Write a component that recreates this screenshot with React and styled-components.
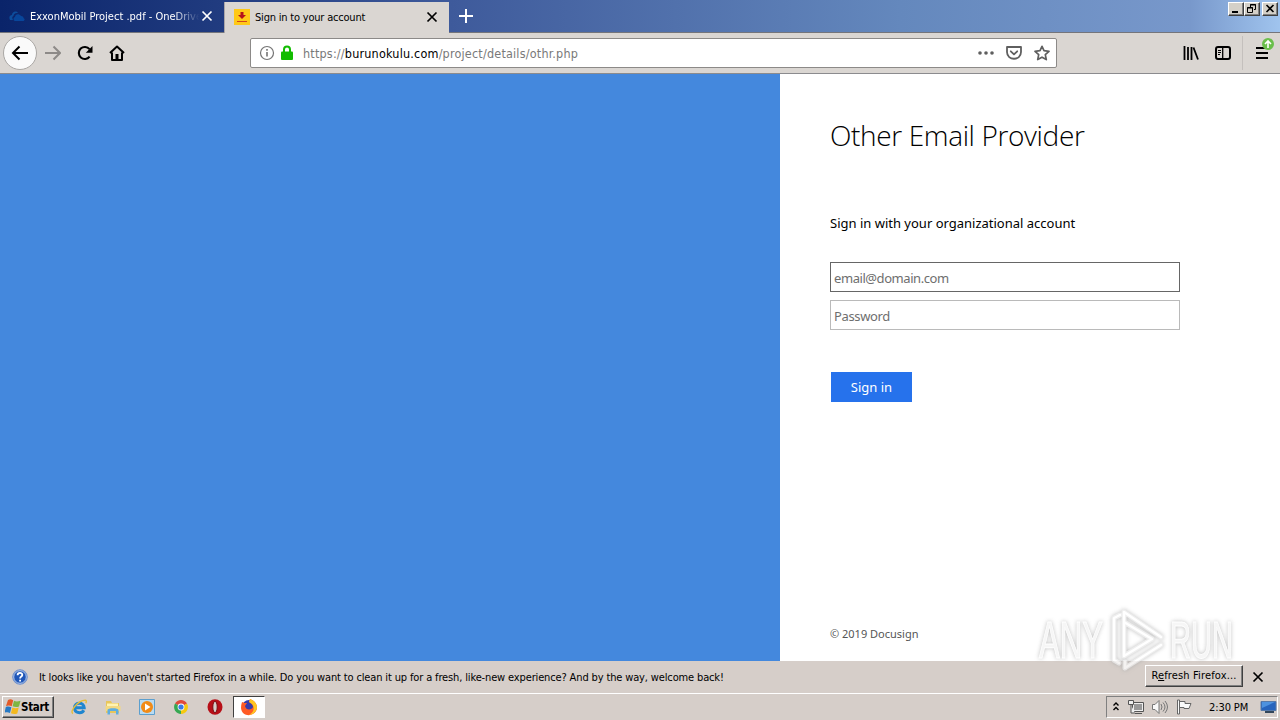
import styled, { createGlobalStyle, css } from "styled-components";

const GlobalStyle = createGlobalStyle`
  * { box-sizing: border-box; }
  body { margin: 0; overflow: hidden; }
  svg { display: block; flex: none; }
`;

const uiFont = '"DejaVu Sans Condensed", "DejaVu Sans", sans-serif';
const pageFont = '"Noto Sans", "Open Sans", sans-serif';

const Screen = styled.div`
  position: relative;
  width: 1280px;
  height: 720px;
  display: flex;
  flex-direction: column;
  font-family: ${uiFont};
  font-size: 11px;
  color: #000;
  background: #d4d0c8;
`;

const TabStrip = styled.div`
  height: 33px;
  flex: none;
  display: flex;
  align-items: flex-start;
  background: linear-gradient(90deg, #0a246a 0, #213c80 225px, #3e5a9b 450px, #6488bd 900px, #7898cb 1190px, #a0c4ee 1280px);
  border-bottom: 1px solid #74757b;
`;

const Tab = styled.div`
  display: flex;
  align-items: center;
  width: ${(p) => (p.$active ? 225 : 224)}px;
  height: ${(p) => (p.$active ? 31 : 32)}px;
  margin-top: ${(p) => (p.$active ? 2 : 0)}px;
  padding: 0 11px ${(p) => (p.$active ? 1 : 0)}px 9px;
  color: ${(p) => (p.$active ? "#000" : "#fff")};
  background: ${(p) => (p.$active ? "#dad6d2" : "transparent")};
  border-left: ${(p) => (p.$active ? "1px solid #aaa6a8" : "0")};
`;

const TabTitle = styled.span`
  flex: 1;
  margin-left: 5px;
  overflow: hidden;
  white-space: nowrap;
  letter-spacing: ${(p) => p.$spacing}px;
  ${(p) =>
    p.$fade &&
    css`
      mask-image: linear-gradient(90deg, #000 84%, transparent 99%);
    `}
`;

const NewTab = styled.div`
  padding: 8px 9px;
`;

const WindowButtons = styled.div`
  display: flex;
  margin: 2px 2px 0 auto;
`;

const WindowButton = styled.div`
  width: 16px;
  height: 14px;
  margin-left: ${(p) => (p.$gap ? 2 : 0)}px;
  background: #d4d0c8;
  border: 1px solid;
  border-color: #fff #404040 #404040 #fff;
  box-shadow: inset -1px -1px 0 #808080;
`;

const Toolbar = styled.div`
  height: 41px;
  flex: none;
  display: flex;
  align-items: center;
  background: #dad6d2;
  border-bottom: 1px solid #8b8b8e;
`;

const BackButton = styled.div`
  width: 34px;
  height: 34px;
  margin: 0 8px 0 3px;
  display: flex;
  align-items: center;
  justify-content: center;
  border: 1px solid #aaa7a4;
  border-radius: 50%;
  background: #fafafa;
`;

const NavIcons = styled.div`
  display: flex;
  gap: 16px;
`;

const UrlBar = styled.div`
  width: 807px;
  height: 30px;
  margin-left: 125px;
  padding: 0 6px 0 8px;
  display: flex;
  align-items: center;
  background: #fff;
  border: 1px solid #8c8a88;
  border-radius: 2px;
`;

const SiteIdentity = styled.div`
  display: flex;
  gap: 6px;
`;

const Url = styled.span`
  flex: 1;
  margin-left: 10px;
  font-size: 12.5px;
  letter-spacing: 0.19px;
  color: #797979;

  b {
    font-weight: 400;
    color: #000;
  }
`;

const UrlActions = styled.div`
  display: flex;
  gap: 12px;
`;

const ToolIcons = styled.div`
  display: flex;
  align-items: center;
  gap: 16px;
  margin-left: auto;
`;

const MenuButton = styled.div`
  display: flex;
  align-items: center;
  height: 34px;
  width: 38px;
  margin-left: -5px;
  padding-left: 11px;
  border-left: 1px solid #c4c0bd;
`;

const Page = styled.main`
  height: 587px;
  flex: none;
  display: flex;
  background: #fff;
  font-family: ${pageFont};
`;

const Illustration = styled.div`
  width: 780px;
  background: #4488dd;
`;

const LoginPanel = styled.section`
  width: 500px;
  padding: 40px 100px 20px 50px;
  display: flex;
  flex-direction: column;
  align-items: flex-start;
`;

const Title = styled.h1`
  margin: 0;
  font-family: "Open Sans", "Noto Sans", sans-serif;
  font-size: 28px;
  line-height: 42px;
  font-weight: 300;
  letter-spacing: -0.36px;
  white-space: nowrap;
`;

const Instruction = styled.p`
  margin: 57px 0 28px;
  font-size: 13px;
  line-height: 21px;
  white-space: nowrap;
`;

const Field = styled.input`
  width: 350px;
  height: 30px;
  margin: 0 0 8px;
  padding: 1px 3px 0;
  border: 1px solid ${(p) => (p.$focused ? "#666666" : "#bababa")};
  border-radius: 0;
  outline: none;
  font-family: ${pageFont};
  font-size: 13px;
  letter-spacing: ${(p) => p.$spacing}px;

  &::placeholder {
    color: #6e6e6e;
    opacity: 1;
  }
`;

const SubmitButton = styled.button`
  width: 81px;
  height: 30px;
  margin: 34px 0 0 1px;
  padding: 0;
  border: 0;
  background: #2672ec;
  color: #fff;
  font-family: ${pageFont};
  font-size: 13px;
`;

const Copyright = styled.footer`
  margin-top: auto;
  font-size: 11px;
  line-height: 15px;
  color: #555;
`;

const NotificationBar = styled.div`
  height: 32px;
  flex: none;
  display: flex;
  align-items: center;
  padding: 0 16px 0 12px;
  background: #d6cec9;
`;

const Message = styled.span`
  flex: 1;
  margin-left: 11px;
  white-space: nowrap;
  letter-spacing: -0.14px;
`;

const RefreshButton = styled.div`
  width: 98px;
  height: 22px;
  margin: -2px 9px 0 0;
  line-height: 20px;
  text-align: center;
  white-space: nowrap;
  letter-spacing: 0.14px;
  background: #d6cec9;
  border: 1px solid;
  border-color: #fff #404040 #404040 #fff;
  box-shadow: inset -1px -1px 0 #808080;
`;

const Taskbar = styled.div`
  height: 27px;
  flex: none;
  display: flex;
  align-items: flex-start;
  padding: 2px 2px 0;
  background: #d6cec9;
  border-top: 1px solid #fff;
`;

const StartButton = styled.div`
  width: 52px;
  height: 22px;
  display: flex;
  align-items: center;
  padding-left: 2px;
  font-size: 11.5px;
  font-weight: 700;
  letter-spacing: -0.3px;
  border: 1px solid;
  border-color: #fff #404040 #404040 #fff;
  box-shadow: inset -1px -1px 0 #808080;
`;

const Launchers = styled.div`
  display: flex;
  align-items: center;
  height: 22px;
  gap: 18px;
  margin: 0 10px 0 17px;
`;

const ActiveTask = styled.div`
  width: 32px;
  height: 22px;
  display: flex;
  align-items: center;
  justify-content: center;
  background: #fff;
  border: 1px solid;
  border-color: #404040 #fff #fff #404040;
`;

const Tray = styled.div`
  width: 172px;
  height: 22px;
  margin-left: auto;
  display: flex;
  align-items: center;
  padding-left: 5px;
  border: 1px solid;
  border-color: #808080 #fff #fff #808080;
`;

const TrayIcons = styled.div`
  display: flex;
  align-items: center;
  gap: 8px;
`;

const Clock = styled.span`
  width: 40px;
  margin: 0 11px 0 17px;
  white-space: nowrap;
  letter-spacing: -0.1px;
`;

const Watermark = styled.div`
  position: absolute;
  left: 1039px;
  top: 608px;
  display: flex;
  align-items: center;
  gap: 5px;
  opacity: 0.75;
  filter: drop-shadow(0 0 2px #aaa);
`;

const WatermarkWord = styled.span`
  width: ${(p) => p.$width}px;
  font-family: "Liberation Sans", sans-serif;
  font-size: 51px;
  line-height: 64px;
  color: #f3f3f3;
  -webkit-text-stroke: 1px #fff;

  span {
    display: inline-block;
    transform: scaleX(${(p) => p.$scale});
    transform-origin: left;
  }
`;

const CloseIcon = ({ color = "#000", size = 12 }) => (
  <svg width={size} height={size} viewBox="0 0 12 12">
    <path d="M1.5 1.5l9 9m0-9l-9 9" stroke={color} strokeWidth="1.7" />
  </svg>
);

const CloudIcon = () => (
  <svg width="16" height="16" viewBox="0 0 16 16">
    <path d="M1 12C-.5 9 1 7 3 7c0-3 4-5 6-2-3-.5-4.5 1-4.5 3C3 8.500 3 10 4 12z" fill="#0d4d9c" />
    <path d="M6 13c-2-.5-2-3.500 0-4 0-3 4-4 6-1 2 0 2.500 1 2.500 2 2 1 1 3-.5 3z" fill="#08469b" />
  </svg>
);

const DownloadIcon = () => (
  <svg width="16" height="16" viewBox="0 0 16 16">
    <path fill="#ffc917" d="M0 0h16v16H0z" />
    <path d="M6.500 3h3v3H12L8 10 4 6h2.500z" fill="#b5121b" />
    <path d="M3 12.500h10" stroke="#d3451b" />
  </svg>
);

const BackIcon = () => (
  <svg width="18" height="16" viewBox="0 0 18 16">
    <path d="M17 8H2m6.500-6.500L2 8l6.500 6.500" stroke="#000" strokeWidth="2" fill="none" />
  </svg>
);

const ForwardIcon = () => (
  <svg width="16" height="16" viewBox="0 0 16 16">
    <path d="M0 8h14.500M8.500 1.500L15 8l-6.500 6.500" stroke="#8d8a88" strokeWidth="2" fill="none" />
  </svg>
);

const ReloadIcon = () => (
  <svg width="16" height="16" viewBox="0 0 16 16">
    <path d="M12.600 11.600A6 6 0 1 1 12.500 4.200" stroke="#000" strokeWidth="2.100" fill="none" />
    <path d="M15.500 1v6.700H8.800z" />
  </svg>
);

const HomeIcon = () => (
  <svg width="16" height="16" viewBox="0 0 16 16">
    <path d="M1 8l7-6.500L15 8M3 7.500V15h10V7.500" stroke="#000" strokeWidth="2" fill="none" strokeLinejoin="round" />
    <path d="M6.500 9h3v6h-3z" />
  </svg>
);

const InfoIcon = () => (
  <svg width="16" height="16" viewBox="0 0 16 16">
    <circle cx="8" cy="8" r="6.500" stroke="#747474" strokeWidth="1.200" fill="none" />
    <path d="M8 7v4.500M8 4v1.700" stroke="#747474" strokeWidth="1.600" />
  </svg>
);

const LockIcon = () => (
  <svg width="12" height="16" viewBox="0 0 12 16">
    <path d="M3 7V4.500C3 .6 9 .6 9 4.500V7" stroke="#12bc00" strokeWidth="2" fill="none" />
    <rect y="6.500" width="12" height="8.500" rx="1" fill="#12bc00" />
  </svg>
);

const DotsIcon = () => (
  <svg width="16" height="16" viewBox="0 0 16 16" fill="#5f5f5f">
    <circle cx="2" cy="8" r="1.800" />
    <circle cx="8" cy="8" r="1.800" />
    <circle cx="14" cy="8" r="1.800" />
  </svg>
);

const PocketIcon = () => (
  <svg width="16" height="16" viewBox="0 0 16 16" fill="none" stroke="#5f5f5f" strokeWidth="1.800" strokeLinejoin="round">
    <path d="M1 2h14v5c0 9-14 9-14 0z" />
    <path d="M4.800 6.300L8 9.300l3.200-3" strokeLinecap="round" />
  </svg>
);

const StarIcon = () => (
  <svg width="16" height="16" viewBox="0 0 16 16">
    <path d="M8 1.300l2 4.400 5 .6-3.700 3.300 1 5L8 12.200l-4.300 2.400 1-5L1 6.300l5-.6z" stroke="#5f5f5f" strokeWidth="1.700" fill="none" strokeLinejoin="round" />
  </svg>
);

const LibraryIcon = () => (
  <svg width="16" height="16" viewBox="0 0 16 16">
    <path d="M1.500 1v14M5 2v13M8.500 2v13M10.500 2.500L15 14.500" stroke="#000" fill="none" strokeWidth="1.800" />
  </svg>
);

const SidebarIcon = () => (
  <svg width="16" height="16" viewBox="0 0 16 16">
    <rect x="1" y="2" width="14" height="12" rx="2" stroke="#000" strokeWidth="2" fill="none" />
    <path d="M7.700 2v12" stroke="#000" strokeWidth="1.300" />
    <path d="M3 5.500h3m-3 2h3m-3 2h2" stroke="#000" />
  </svg>
);

const MenuIcon = () => (
  <svg width="24" height="32" viewBox="0 0 24 32">
    <path d="M2 11h12M2 16h12M2 21h12" stroke="#000" strokeWidth="2" />
    <circle cx="14" cy="7" r="6" fill="#6abf4b" />
    <path d="M14 11V4m-3 3l3-3 3 3" stroke="#fff" strokeWidth="1.600" fill="none" />
  </svg>
);

const HelpIcon = () => (
  <svg width="16" height="16" viewBox="0 0 16 16">
    <circle cx="8" cy="8" r="7.300" fill="#1f56b8" stroke="#7b98cf" />
    <circle cx="8" cy="8" r="6.300" fill="none" stroke="#dce7f8" strokeWidth=".8" />
    <path d="M5.600 6.300C5.600 3 10.500 3.300 10.300 6c0 1.500-2.200 1.600-2.200 3.400M8.100 10.700v1.800" stroke="#fff" strokeWidth="1.800" fill="none" />
  </svg>
);

const WindowsIcon = () => (
  <svg width="16" height="16" viewBox="0 0 16 16">
    <path d="M3 1c2-1 3-1 5.200.3L6.700 7.300C5 6.300 3 6.300 1 7z" fill="#e45a27" />
    <path d="M9 1.800c2 1 4 .8 6.500-.1L14 7.400c-2 .9-4.300.8-6.400-.1z" fill="#7eb642" />
    <path d="M.8 8c2-.8 3.700-.6 5.600.3L5 14c-2-1-3.500-1-5.500-.2z" fill="#2779c4" />
    <path d="M7.400 8.500c2 .9 4.300.9 6.300.1L12.300 14.500c-2 .8-4.300.8-6.400-.2z" fill="#f4b91f" />
  </svg>
);

const ExplorerIcon = () => (
  <svg width="16" height="16" viewBox="0 0 16 16" fill="none">
    <path d="M12.800 11.300c-2 3.700-9.300 3.200-9.300-2.500 0-6 9.500-6 9.700 0H5" stroke="#1f86cf" strokeWidth="3" />
    <path d="M2 14.500C-2 13 7 1 14.500 1.300c1.200.2.800 2 .3 3" stroke="#e6bd38" strokeWidth="1.400" />
  </svg>
);

const FolderIcon = () => (
  <svg width="16" height="16" viewBox="0 0 16 16">
    <path d="M1 2h5l1 2h7v10H1z" fill="#e8c65b" />
    <path d="M2 4.500h11v4H2z" fill="#fff3b1" />
    <path d="M.5 7h15v5H.5z" fill="#f2d982" />
    <path d="M2.500 15.500V11c0-2.500 11-2.500 11 0v4.500H11V12H5v3.500z" fill="#5eade0" />
  </svg>
);

const MediaIcon = () => (
  <svg width="16" height="16" viewBox="0 0 16 16">
    <path d="M.5.500h15v15H.5z" fill="#b9dbf2" stroke="#5c9fce" />
    <circle cx="8" cy="8" r="6" fill="#f18b18" />
    <path d="M6 4.500v7L11.500 8z" fill="#fff" />
  </svg>
);

const ChromeIcon = () => (
  <svg width="16" height="16" viewBox="0 0 16 16">
    <path d="M8 8L2 4.500A7 7 0 0 1 14 4.500z" fill="#e04a3b" />
    <path d="M8 8l6-3.500A7 7 0 0 1 8 15z" fill="#f6c90e" />
    <path d="M8 8v7A7 7 0 0 1 2 4.500z" fill="#36a852" />
    <circle cx="8" cy="8" r="3.400" fill="#fff" />
    <circle cx="8" cy="8" r="2.600" fill="#397be6" />
  </svg>
);

const OperaIcon = () => (
  <svg width="16" height="16" viewBox="0 0 16 16">
    <ellipse cx="8" cy="8" rx="7.500" ry="7.700" fill="#b70f17" />
    <ellipse cx="8" cy="8" rx="2.200" ry="5.700" fill="#d6cec9" stroke="#770b10" />
  </svg>
);

const FirefoxIcon = () => (
  <svg width="18" height="18" viewBox="0 0 18 18">
    <circle cx="9" cy="9" r="7" fill="#383dab" />
    <path d="M2 4c2 1 3 1 5 1L5 8c1 5 7 4 8 1 0-2-2-4-4-5l1-3c5 2 7 5 7 9-1 9-15 10-16 0 0-2 .3-4 1-6z" fill="#ff5b25" />
    <path d="M10 1c5 2 7 5 7 9-1 4-4 7-8 7 5-3 6-7 3-11L9 4z" fill="#ffc71f" />
  </svg>
);

const NetworkIcon = () => (
  <svg width="16" height="16" viewBox="0 0 16 16" stroke="#555" fill="#eee">
    <path d="M4.500 3.500h11v9h-11zM7 14.500h7" />
    <path d="M6 5h8v6H6z" fill="#999" stroke="none" />
    <path d="M.5 1.500h5v4h-5zM3 6v8h4" />
  </svg>
);

const SpeakerIcon = () => (
  <svg width="16" height="16" viewBox="0 0 16 16" stroke="#777" fill="none">
    <path d="M.5 5.500H3l4-4v13l-4-4H.5z" fill="#f8f8f8" />
    <path d="M9 5q2 3 0 6M11 3.500q4 4.500 0 9M13 2q5 6 0 12" />
  </svg>
);

const FlagIcon = () => (
  <svg width="16" height="16" viewBox="0 0 16 16" stroke="#666" fill="#fafafa">
    <path d="M1.500 1v14h2V1zM3.500 2.500H9v2h6l-2 5H8v-1H3.500z" />
  </svg>
);

const MonitorIcon = () => (
  <svg width="17" height="16" viewBox="0 0 17 16">
    <path d="M1 2.500h15v9H1z" fill="#2664bd" stroke="#577aa9" />
    <path d="M2 3h13L2 9z" fill="#4d92df" />
    <path d="M5 13h9" stroke="#33475b" strokeWidth="2" />
  </svg>
);

const App = () => {
  return (
    <Screen>
      <GlobalStyle />
      <TabStrip>
        <Tab>
          <CloudIcon />
          <TabTitle $spacing={0} $fade>ExxonMobil Project .pdf - OneDrive</TabTitle>
          <CloseIcon color="#fff" />
        </Tab>
        <Tab $active>
          <DownloadIcon />
          <TabTitle $spacing={-0.2}>Sign in to your account</TabTitle>
          <CloseIcon />
        </Tab>
        <NewTab>
          <svg width="16" height="16">
            <path d="M8 1v14M1 8h14" stroke="#fff" strokeWidth="2" />
          </svg>
        </NewTab>
        <WindowButtons>
          <WindowButton>
            <svg width="14" height="12"><path d="M3 9h6" stroke="#000" strokeWidth="2" /></svg>
          </WindowButton>
          <WindowButton>
            <svg width="14" height="12" fill="none" stroke="#000">
              <path d="M5.500 4V1.500h5v5H9M5 2h6M2.500 4.500h5v5h-5zM2 5h6" />
            </svg>
          </WindowButton>
          <WindowButton $gap>
            <svg width="14" height="12"><path d="M3.500 2l7 7m0-7l-7 7" stroke="#000" strokeWidth="1.600" /></svg>
          </WindowButton>
        </WindowButtons>
      </TabStrip>

      <Toolbar>
        <BackButton><BackIcon /></BackButton>
        <NavIcons>
          <ForwardIcon />
          <ReloadIcon />
          <HomeIcon />
        </NavIcons>
        <UrlBar>
          <SiteIdentity>
            <InfoIcon />
            <LockIcon />
          </SiteIdentity>
          <Url>https://<b>burunokulu.com</b>/project/details/othr.php</Url>
          <UrlActions>
            <DotsIcon />
            <PocketIcon />
            <StarIcon />
          </UrlActions>
        </UrlBar>
        <ToolIcons>
          <LibraryIcon />
          <SidebarIcon />
          <MenuButton><MenuIcon /></MenuButton>
        </ToolIcons>
      </Toolbar>

      <Page>
        <Illustration />
        <LoginPanel>
          <Title>Other Email Provider</Title>
          <Instruction>Sign in with your organizational account</Instruction>
          <Field $focused $spacing={-0.43} placeholder="email@domain.com" />
          <Field $spacing={-0.35} type="password" placeholder="Password" />
          <SubmitButton>Sign in</SubmitButton>
          <Copyright>© 2019 Docusign</Copyright>
        </LoginPanel>
      </Page>

      <NotificationBar>
        <HelpIcon />
        <Message>
          It looks like you haven't started Firefox in a while. Do you want to clean it up for a fresh, like-new experience? And by the way, welcome back!
        </Message>
        <RefreshButton>R<u>e</u>fresh Firefox...</RefreshButton>
        <CloseIcon />
      </NotificationBar>

      <Taskbar>
        <StartButton><WindowsIcon />Start</StartButton>
        <Launchers>
          <ExplorerIcon />
          <FolderIcon />
          <MediaIcon />
          <ChromeIcon />
          <OperaIcon />
        </Launchers>
        <ActiveTask><FirefoxIcon /></ActiveTask>
        <Tray>
          <TrayIcons>
            <svg width="8" height="12" fill="none" stroke="#000" strokeWidth="1.400">
              <path d="M1.500 4.500L4 2l2.500 2.500M1.500 9L4 6.500 6.500 9" />
            </svg>
            <NetworkIcon />
            <SpeakerIcon />
            <FlagIcon />
          </TrayIcons>
          <Clock>2:30 PM</Clock>
          <MonitorIcon />
        </Tray>
      </Taskbar>

      <Watermark>
        <WatermarkWord $width={63} $scale={0.61}><span>ANY</span></WatermarkWord>
        <svg width="58" height="66" viewBox="0 0 58 66" fill="none" strokeLinejoin="round" strokeLinecap="round">
          <path d="M13 7l-6 3v42l5 3M17 4v44M17 4l37 25M17 14v34l28-17zM18 60l36-23M18 54v6" stroke="#e9e9e9" strokeWidth="5" />
          <path d="M13 7l-6 3v42l5 3M17 48V4l37 25M17 14l28 17-28 17M18 54v6l36-23" stroke="#fff" strokeWidth="2.500" />
        </svg>
        <WatermarkWord $width={64} $scale={0.57}><span>RUN</span></WatermarkWord>
      </Watermark>
    </Screen>
  );
};

export default App;
